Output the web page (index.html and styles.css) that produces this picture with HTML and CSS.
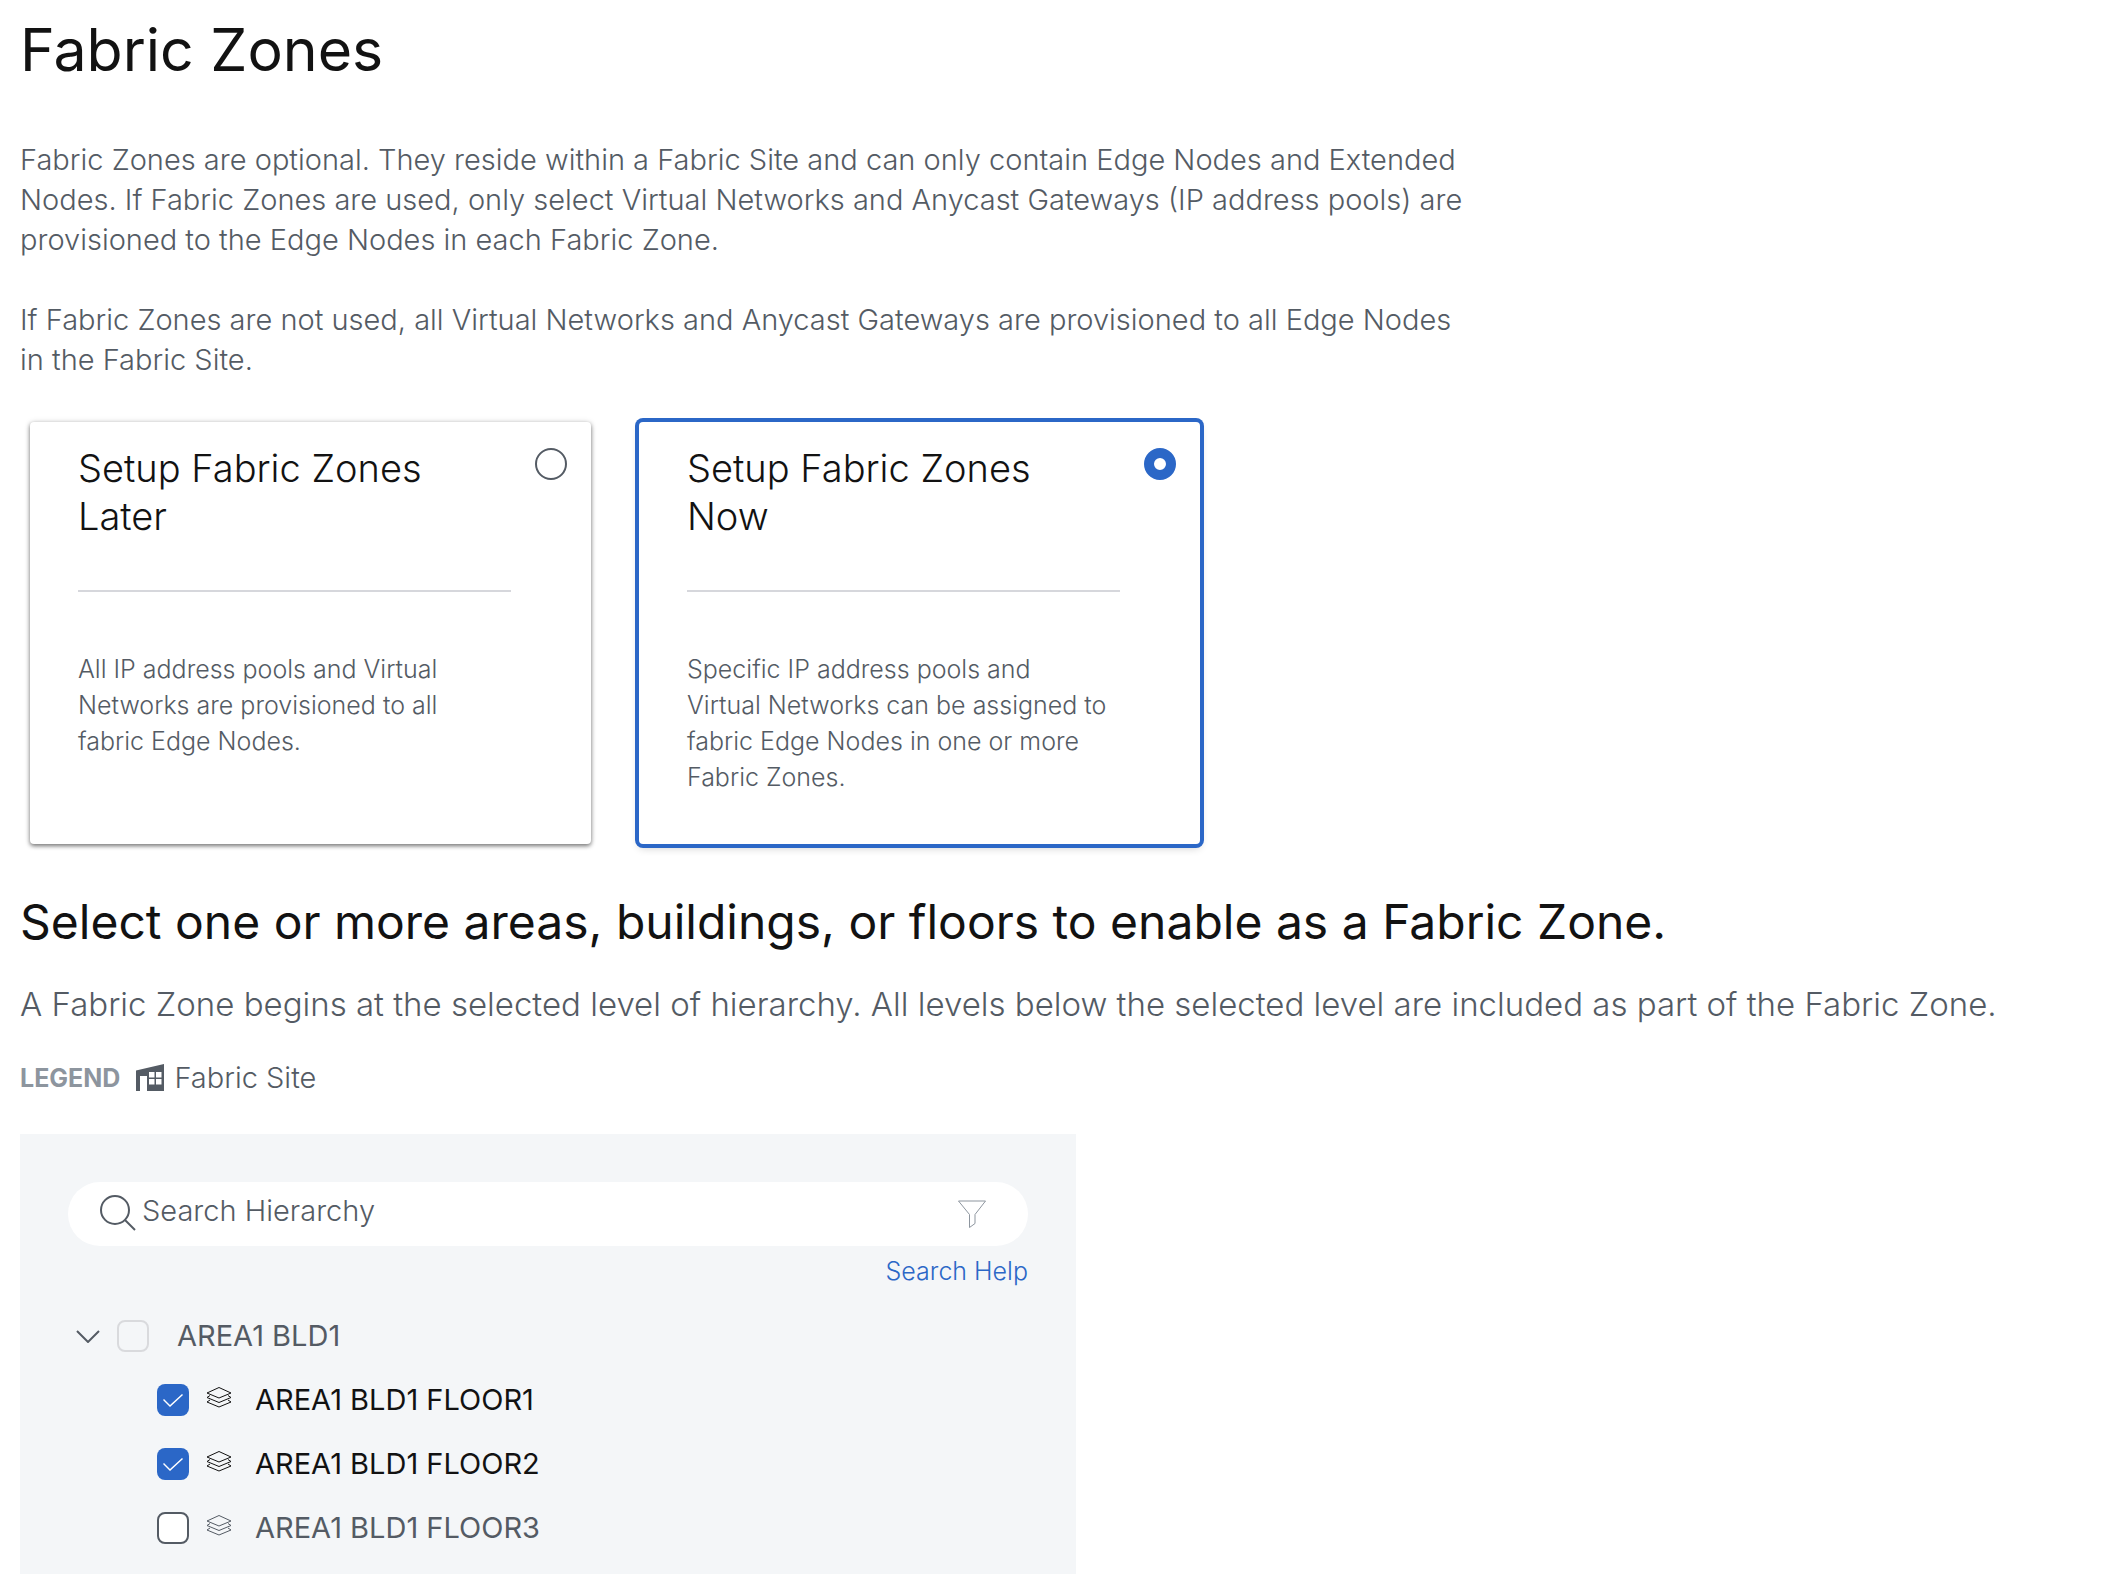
FILE: index.html
```html
<!DOCTYPE html>
<html lang="en">
<head>
<meta charset="utf-8">
<title>Fabric Zones</title>
<link rel="stylesheet" href="styles.css">
</head>
<body>
<svg class="sprite" aria-hidden="true">
  <symbol id="layers" viewBox="0 0 28 24">
    <path d="M14 1.500 26 7 14 12 2 7Z"/>
    <path d="M5 9.500 2 11.500 14 16.500 26 11.500 23 9.500"/>
    <path d="M5 14 2 16 14 21 26 16 23 14"/>
  </symbol>
</svg>
<main class="page">
  <h1 class="title">Fabric Zones</h1>
  <div class="intro">
    <p>Fabric Zones are optional. They reside within a Fabric Site and can only contain Edge Nodes and Extended<br> Nodes. If Fabric Zones are used, only select Virtual Networks and Anycast Gateways (IP address pools) are<br> provisioned to the Edge Nodes in each Fabric Zone.</p>
    <p>If Fabric Zones are not used, all Virtual Networks and Anycast Gateways are provisioned to all Edge Nodes<br> in the Fabric Site.</p>
  </div>
  <div class="cards">
    <label class="card">
      <span class="card-body">
        <span class="card-title">Setup Fabric Zones Later</span>
        <span class="card-text">All IP address pools and Virtual<br> Networks are provisioned to all<br> fabric Edge Nodes.</span>
      </span>
      <input class="radio" type="radio" name="setup">
    </label>
    <label class="card card-selected">
      <span class="card-body">
        <span class="card-title">Setup Fabric Zones Now</span>
        <span class="card-text">Specific IP address pools and<br> Virtual Networks can be assigned to<br> fabric Edge Nodes in one or more<br> Fabric Zones.</span>
      </span>
      <input class="radio" type="radio" name="setup" checked>
    </label>
  </div>
  <h2 class="subtitle">Select one or more areas, buildings, or floors to enable as a Fabric Zone.</h2>
  <p class="lead">A Fabric Zone begins at the selected level of hierarchy. All levels below the selected level are included as part of the Fabric Zone.</p>
  <div class="legend">
    <span class="legend-label">LEGEND</span>
    <svg class="site-icon" viewBox="0 0 28 28" aria-hidden="true"><path fill-rule="evenodd" d="M0 6.500 28 0V27H11V12H4V27H0ZM13 8V13.500H18.500V8ZM20 8V13.500H25.500V8ZM13 15V20.500H18.500V15ZM20 15V20.500H25.500V15Z"/></svg>
    <span>Fabric Site</span>
  </div>
  <section class="panel">
    <div class="search">
      <svg class="search-icon" viewBox="0 0 36 36" aria-hidden="true"><circle cx="15" cy="14" r="14"/><path d="M25 24 35 34"/></svg>
      <input class="search-input" type="text" placeholder="Search Hierarchy" aria-label="Search Hierarchy">
      <button class="filter" type="button" aria-label="Filter"><svg viewBox="0 0 28 28" aria-hidden="true"><path d="M.5 1H27.500L17 14.500V23.500L11.500 27.500V14.500Z"/></svg></button>
    </div>
    <a class="help" href="#">Search Help</a>
    <ul class="tree">
      <li>
        <div class="row">
          <button class="toggle" type="button" aria-label="Collapse AREA1 BLD1"><svg viewBox="0 0 24 14" aria-hidden="true"><path d="M1 2 12 13 23 2"/></svg></button>
          <label class="node node-parent"><input class="check" type="checkbox" disabled><span>AREA1 BLD1</span></label>
        </div>
        <ul class="tree-children">
          <li class="row"><label class="node node-on"><input class="check" type="checkbox" checked><svg class="layers" aria-hidden="true"><use href="#layers"/></svg><span>AREA1 BLD1 FLOOR1</span></label></li>
          <li class="row"><label class="node node-on"><input class="check" type="checkbox" checked><svg class="layers" aria-hidden="true"><use href="#layers"/></svg><span>AREA1 BLD1 FLOOR2</span></label></li>
          <li class="row"><label class="node"><input class="check" type="checkbox"><svg class="layers" aria-hidden="true"><use href="#layers"/></svg><span>AREA1 BLD1 FLOOR3</span></label></li>
        </ul>
      </li>
    </ul>
  </section>
</main>
</body>
</html>
```
FILE: styles.css
```css
:root {
  --ink: #121212;
  --gray: #545b64;
  --blue: #2b67c7;
  --panel: #f4f6f8;
}

* {
  box-sizing: border-box;
}

body {
  margin: 0;
  background: #fff;
  color: var(--gray);
  font-family: Inter, "Liberation Sans", sans-serif;
  font-size: 29px;
  font-weight: 300;
  line-height: 40px;
}

h1, h2, p, ul {
  margin: 0;
  padding: 0;
}

ul {
  list-style: none;
}

button {
  padding: 0;
  border: 0;
  background: none;
}

svg {
  display: block;
  fill: none;
}

input {
  margin: 0;
}

.sprite {
  display: none;
}

.page {
  display: flex;
  flex-direction: column;
  align-items: flex-start;
  min-height: 100vh;
  padding: 14px 20px 0;
}

.title {
  color: var(--ink);
  font-size: 59px;
  font-weight: 400;
  line-height: 72px;
}

.intro {
  display: grid;
  gap: 40px;
  margin-top: 54px;
}

.cards {
  display: flex;
  flex-wrap: wrap;
  gap: 48px;
  margin: 42px 0 0 10px;
}

.card {
  display: flex;
  justify-content: space-between;
  width: 561px;
  min-height: 422px;
  padding: 22px 24px 49px 48px;
  border-radius: 4px;
  background: #fff;
  box-shadow: 0 2px 4px rgb(0 0 0 / 50%), 0 0 6px rgb(0 0 0 / 12%);
}

.card-selected {
  box-shadow: 0 0 0 4px var(--blue), 0 4px 8px rgb(0 0 0 / 20%);
}

.card-body {
  width: 433px;
}

.card-title {
  display: block;
  padding: 0 40px 50px 0;
  border-bottom: 2px solid #d6d7dc;
  color: var(--ink);
  font-size: 38px;
  line-height: 48px;
}

.card-text {
  display: block;
  padding-top: 59px;
  font-size: 25px;
  line-height: 36px;
  white-space: nowrap;
}

.radio, .check {
  flex: none;
  width: 32px;
  height: 32px;
  border: 2px solid var(--gray);
  background: #fff;
  appearance: none;
}

.radio {
  margin-top: 4px;
  border-radius: 50%;
}

.radio:checked {
  border: 10px solid var(--blue);
}

.subtitle {
  margin-top: 46px;
  color: var(--ink);
  font-size: 48px;
  font-weight: 400;
  line-height: 64px;
}

.lead {
  margin-top: 30px;
  font-size: 33px;
}

.legend {
  display: flex;
  align-items: center;
  margin-top: 34px;
}

.legend-label {
  margin-right: 16px;
  color: #8d959e;
  font-size: 25px;
  font-weight: 700;
}

.site-icon {
  width: 28px;
  height: 28px;
  margin-right: 10px;
  fill: var(--gray);
}

.panel {
  display: flex;
  flex: 1;
  flex-direction: column;
  width: 100%;
  max-width: 1056px;
  margin-top: 36px;
  padding: 48px 48px 14px;
  background: var(--panel);
}

.search {
  display: flex;
  align-items: center;
  height: 64px;
  padding: 0 42px 0 32px;
  border-radius: 32px;
  background: #fff;
}

.search-icon {
  flex: none;
  width: 36px;
  height: 36px;
  overflow: visible;
  stroke: var(--gray);
  stroke-width: 2;
}

.search-input {
  flex: 1;
  min-width: 0;
  height: 64px;
  padding: 0 6px 8px;
  border: 0;
  outline: 0;
  background: transparent;
  color: var(--gray);
  font: inherit;
}

.search-input::placeholder {
  color: var(--gray);
  opacity: 1;
}

.filter svg {
  width: 28px;
  height: 28px;
  stroke: #8d959e;
}

.help {
  align-self: flex-end;
  margin-top: 5px;
  color: var(--blue);
  font-size: 25px;
  text-decoration: none;
}

.tree {
  margin-top: 13px;
  font-weight: 400;
}

.tree-children {
  padding-left: 89px;
}

.row, .node {
  display: flex;
  align-items: center;
  min-height: 64px;
}

.toggle {
  margin: 0 17px 0 8px;
}

.toggle svg {
  width: 24px;
  height: 14px;
  stroke: var(--gray);
  stroke-width: 2;
}

.node-parent {
  gap: 28px;
}

.node-on {
  color: var(--ink);
}

.check {
  border-radius: 8px;
}

.check:disabled {
  border-color: #d9dadd;
  background: transparent;
}

.check:checked {
  display: grid;
  place-items: center;
  border: 0;
  background: var(--blue);
}

.check:checked::before {
  width: 20px;
  height: 14px;
  margin-top: 2px;
  background: #fff;
  clip-path: polygon(0 6px, 1px 5px, 7px 11px, 19px 0, 20px 1px, 7px 13px);
  content: "";
}

.layers {
  width: 28px;
  height: 24px;
  margin: 0 22px 4px 16px;
  stroke: currentColor;
}
```
